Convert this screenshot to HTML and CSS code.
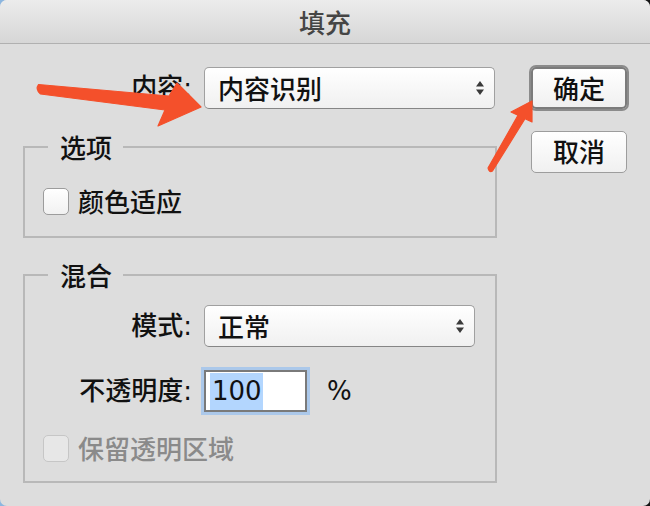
FILE: index.html
```html
<!DOCTYPE html>
<html lang="zh-CN">
<head>
<meta charset="utf-8">
<title>填充</title>
<link rel="stylesheet" href="styles.css">
</head>
<body>
<div class="window">
  <div class="titlebar">填充</div>
  <div class="content">
    <div class="main">
      <div class="row top-row">
        <span class="label">内容:</span>
        <div class="select wide">
          <span class="select-text">内容识别</span>
          <svg class="updown" viewBox="0 0 10 16" width="10" height="16"><path d="M1 6.5 L5 1 L9 6.5 Z M1 9.5 L5 15 L9 9.5 Z"/></svg>
        </div>
      </div>
      <fieldset class="group g1">
        <legend>选项</legend>
        <div class="check"><span class="box"></span><span>颜色适应</span></div>
      </fieldset>
      <fieldset class="group g2">
        <legend>混合</legend>
        <div class="row">
          <span class="label">模式:</span>
          <div class="select mode">
            <span class="select-text">正常</span>
            <svg class="updown" viewBox="0 0 10 16" width="10" height="16"><path d="M1 6.5 L5 1 L9 6.5 Z M1 9.5 L5 15 L9 9.5 Z"/></svg>
          </div>
        </div>
        <div class="row opacity-row">
          <span class="label">不透明度:</span>
          <div class="input"><span class="selected">100</span></div>
          <span class="pct">%</span>
        </div>
        <div class="check disabled"><span class="box"></span><span>保留透明区域</span></div>
      </fieldset>
    </div>
    <div class="buttons">
      <div class="btn default">确定</div>
      <div class="btn cancel">取消</div>
    </div>
  </div>
  <svg class="arrows" viewBox="0 0 650 506" width="650" height="506">
    <path d="M38.5 84.5 L169 96 L177 83 L201 107 L158 126 L165 110 L40.5 94 Q35 89 38.5 84.5 Z"/>
    <path d="M488 168 L518 115.3 L511 112 L532 101 L532 122 L525 118.7 L492.5 171 Q489 173 488 168 Z"/>
  </svg>
</div>
</body>
</html>
```

FILE: styles.css
```css
html {
  margin: 0;
  background: linear-gradient(135deg, #8cb6df 0%, #8cb6df 45%, #151515 55%, #151515 100%);
}
body {
  margin: 0;
  width: 650px;
  height: 506px;
  overflow: hidden;
  font-family: "DejaVu Sans", "Noto Sans CJK SC", sans-serif;
  font-size: 26px;
  color: #111;
}
.window {
  position: relative;
  width: 650px;
  height: 506px;
  background: #dddddd;
  border-radius: 7px;
  overflow: hidden;
}
.titlebar {
  height: 43px;
  line-height: 43px;
  text-align: center;
  color: #454545;
  background: linear-gradient(#ececec, #d6d6d6);
  border-bottom: 1px solid #b0b0b0;
  font-family: "Noto Sans CJK SC", sans-serif;
  font-weight: 500;
}
.content {
  display: flex;
  padding-top: 23px;
}
.main {
  margin-left: 23px;
  width: 474px;
}
.row {
  display: flex;
  align-items: center;
  height: 42px;
}
.label {
  flex: none;
  text-align: right;
  line-height: 30px;
  font-weight: 500;
}
.top-row .label {
  width: 169px;
  margin-right: 12px;
}
.group .label {
  width: 149px;
  margin-right: 12px;
}
.select {
  box-sizing: border-box;
  height: 42px;
  display: flex;
  align-items: center;
  justify-content: space-between;
  padding: 0 9px 0 13px;
  background: linear-gradient(#ffffff, #f0f0f0);
  border: 1.5px solid #a0a0a0;
  border-bottom-color: #858585;
  border-radius: 5px;
}
.select.wide { width: 291px; }
.select.mode { width: 271px; }
.select-text {
  font-family: "Noto Sans CJK SC", sans-serif;
  font-weight: 500;
  line-height: 30px;
}
.updown { fill: #3a3a3a; flex: none; }
.group {
  margin: 0;
  padding: 24px 18px 20px;
  border: 2px solid #b8b8b8;
  min-width: 0;
}
.g1 { margin-top: 23px; }
.g2 { margin-top: 22px; padding-top: 15px; padding-bottom: 18px; }
.group legend {
  margin-left: 5px;
  padding: 0 11px 0 12px;
  line-height: 30px;
  font-family: "Noto Sans CJK SC", sans-serif;
  font-weight: 500;
}
.check {
  display: flex;
  align-items: center;
  height: 30px;
  line-height: 30px;
  font-family: "Noto Sans CJK SC", sans-serif;
  font-weight: 500;
}
.box {
  box-sizing: border-box;
  flex: none;
  width: 26px;
  height: 27px;
  margin-right: 9px;
  border: 1.5px solid #9c9c9c;
  border-radius: 5px;
  background: linear-gradient(#ffffff, #f1f1f1);
}
.check.disabled { color: #8a8a8a; }
.check.disabled .box {
  border-color: #c6c6c6;
  background: #e7e7e7;
}
.g2 .check { margin-top: 21px; }
.opacity-row { margin-top: 23px; }
.input {
  box-sizing: border-box;
  width: 103px;
  height: 42px;
  padding: 1px 4px;
  display: flex;
  align-items: center;
  background: #fff;
  border: 2px solid #7a7a7a;
  box-shadow: 0 0 0 3px #abc8ea;
}
.selected {
  display: inline-block;
  line-height: 37px;
  height: 37px;
  padding: 0 1px 0 2px;
  background: #b3d6fe;
  color: #111;
}
.pct {
  margin-left: 20px;
  line-height: 30px;
}
.buttons {
  margin-left: 34px;
  width: 96px;
  display: flex;
  flex-direction: column;
}
.btn {
  box-sizing: border-box;
  height: 42px;
  line-height: 38px;
  text-align: center;
  font-family: "Noto Sans CJK SC", sans-serif;
  font-weight: 500;
  background: linear-gradient(#ffffff, #f0f0f0);
  border: 1.5px solid #9d9d9d;
  border-radius: 5px;
}
.btn.default {
  border: 2px solid #7b7b7b;
  box-shadow: 0 0 0 2px #8b8b8b;
}
.btn.cancel { margin-top: 22px; }
.arrows {
  position: absolute;
  left: 0;
  top: 0;
  pointer-events: none;
}
.arrows path {
  fill: #f4502b;
  stroke: #f4502b;
  stroke-width: 1.2;
  stroke-linejoin: round;
}
```
